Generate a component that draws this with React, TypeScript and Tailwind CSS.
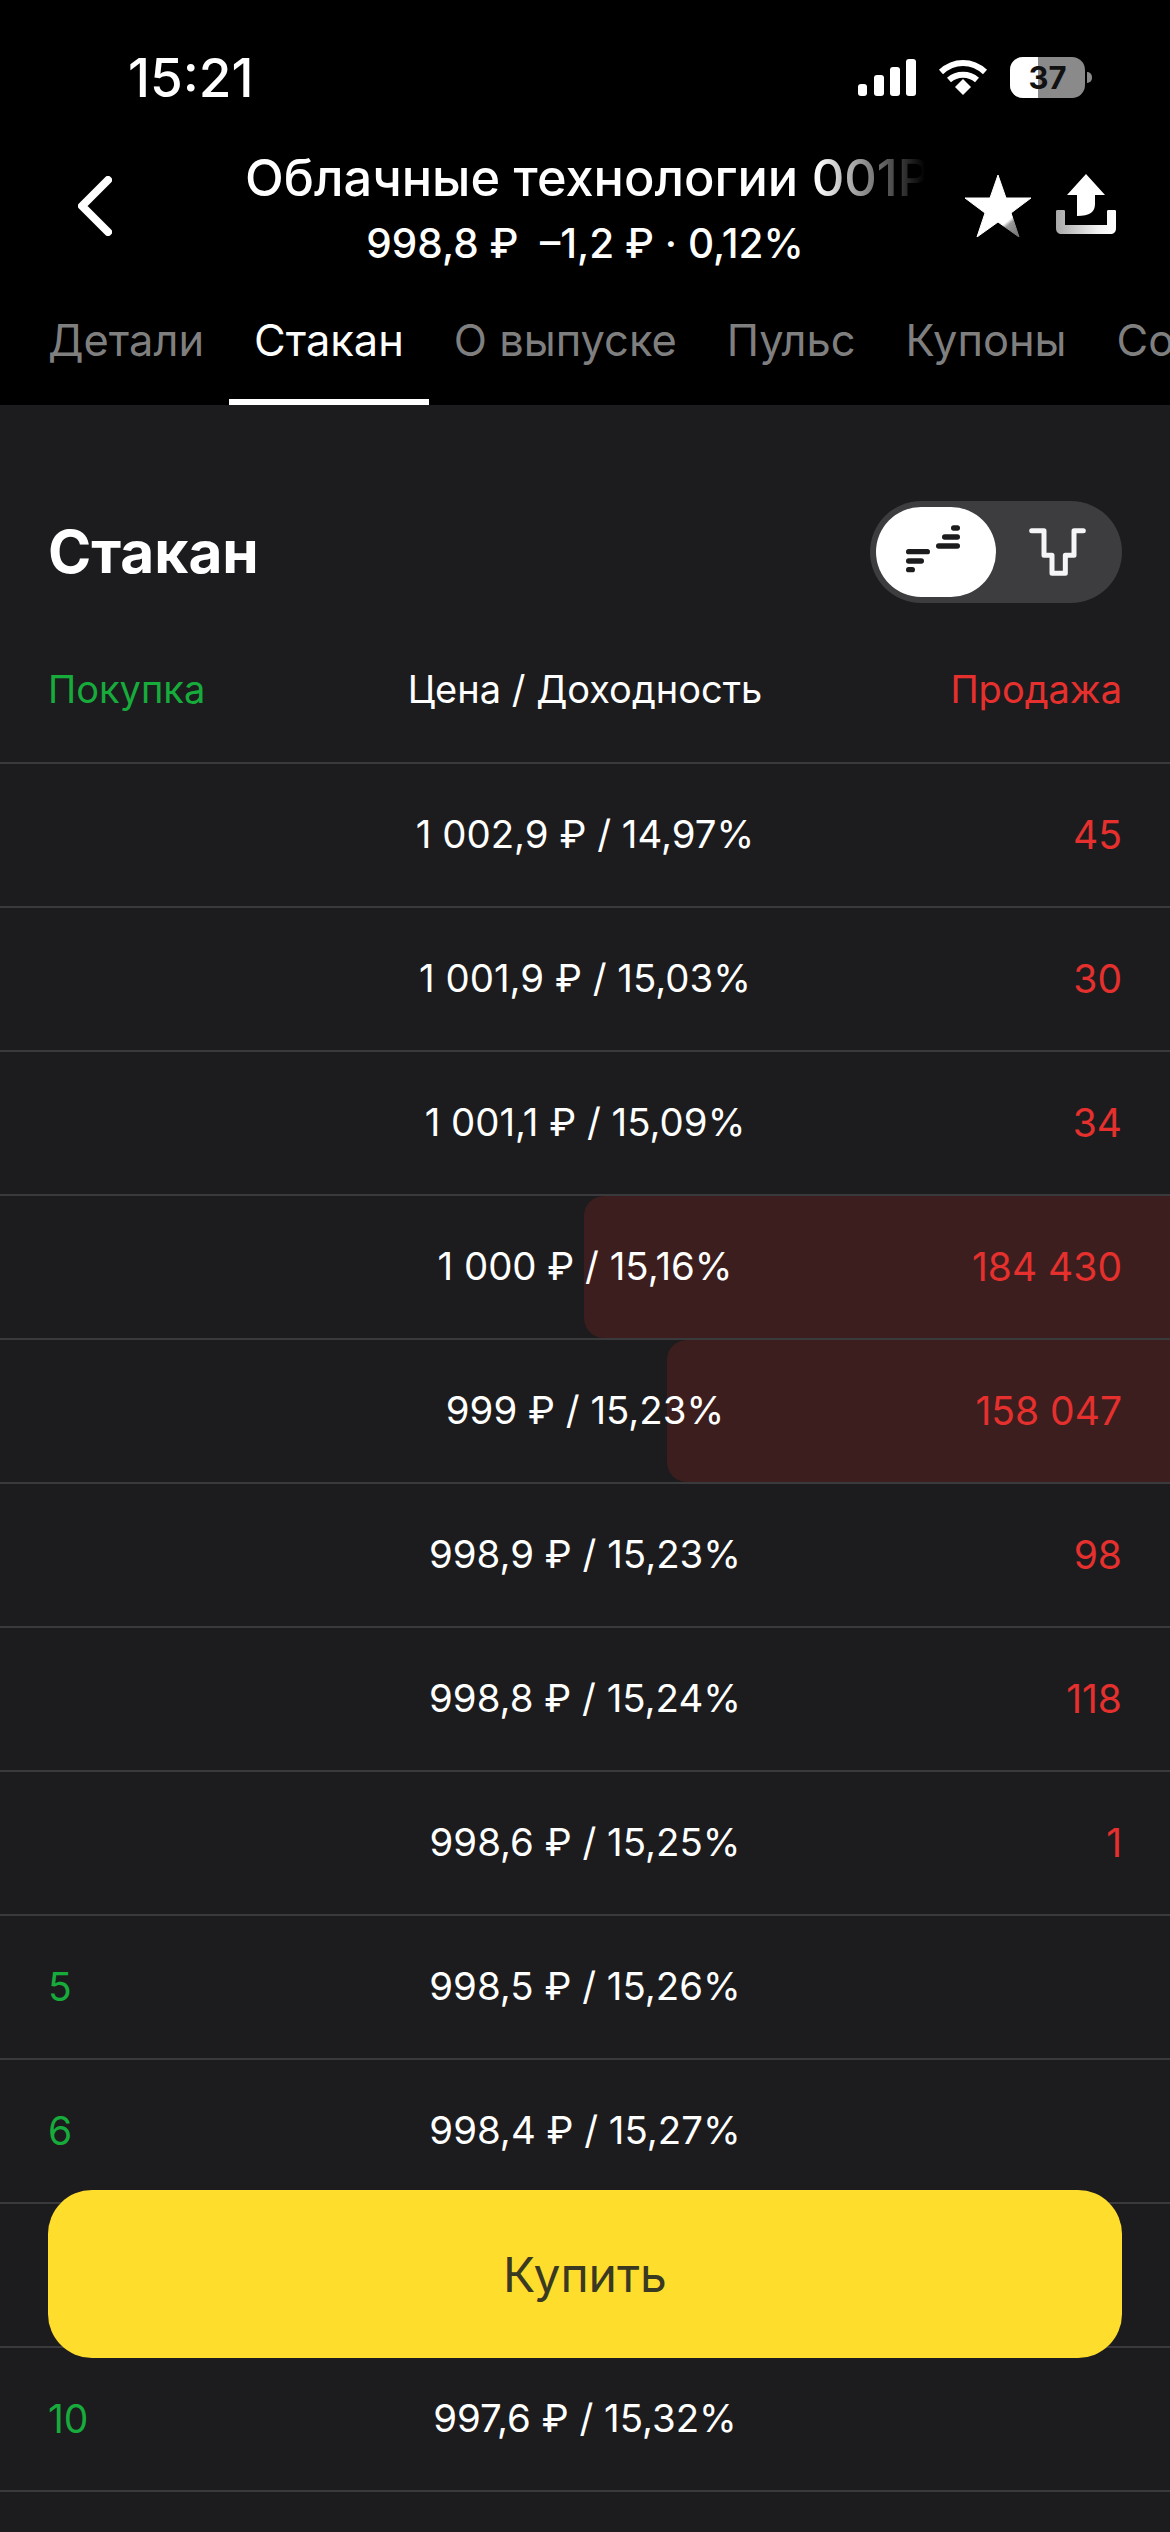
import React from "react";

const font = "font-['Inter','Noto_Sans',sans-serif]";

const tabs = ["Детали", "Стакан", "О выпуске", "Пульс", "Купоны", "События"];

const rows = [
  { price: "1 002,9 ₽ / 14,97%", sell: "45" },
  { price: "1 001,9 ₽ / 15,03%", sell: "30" },
  { price: "1 001,1 ₽ / 15,09%", sell: "34" },
  { price: "1 000 ₽ / 15,16%", sell: "184 430", bar: 584 },
  { price: "999 ₽ / 15,23%", sell: "158 047", bar: 501 },
  { price: "998,9 ₽ / 15,23%", sell: "98" },
  { price: "998,8 ₽ / 15,24%", sell: "118" },
  { price: "998,6 ₽ / 15,25%", sell: "1" },
  { price: "998,5 ₽ / 15,26%", buy: "5" },
  { price: "998,4 ₽ / 15,27%", buy: "6" },
  { price: "" },
  { price: "997,6 ₽ / 15,32%", buy: "10" },
  { price: "" },
];

const SignalIcon = () => (
  <svg width="58" height="37" viewBox="0 0 58 37" fill="#fff">
    <rect x="0" y="25" width="9" height="12" rx="3" />
    <rect x="16" y="16" width="10" height="21" rx="3" />
    <rect x="32" y="8" width="10" height="29" rx="3" />
    <rect x="48" y="0" width="10" height="37" rx="3" />
  </svg>
);

const WifiIcon = () => (
  <svg width="50" height="37" viewBox="0 0 50 37" fill="none" stroke="#fff">
    <path d="M3 13 C16 1 34 1 47 13" strokeWidth="6" />
    <path d="M11 21 C19 14 31 14 39 21" strokeWidth="6" />
    <path d="M17 28 L25 20 L33 28 L25 36 Z" fill="#fff" strokeWidth="0" />
  </svg>
);

const Battery = () => (
  <div className="flex items-center gap-[2px]">
    <div className="relative h-[41px] w-[75px] overflow-hidden rounded-[13px] bg-[#8a8a8a]">
      <div className="absolute inset-y-0 left-0 w-[28px] bg-white" />
      <span className="absolute inset-0 flex items-center justify-center text-[31px] font-bold leading-none text-[#111]">
        37
      </span>
    </div>
    <div className="h-[11px] w-[5px] rounded-r-full bg-[#8a8a8a]" />
  </div>
);

const BackIcon = () => (
  <svg width="34" height="60" viewBox="0 0 34 60" fill="none" className="mt-[26px] shrink-0">
    <path d="M30 4 L4 30 L30 56" stroke="#fff" strokeWidth="8" strokeLinecap="round" strokeLinejoin="round" />
  </svg>
);

const StarIcon = () => (
  <svg width="66" height="62" viewBox="0 0 66 62" className="shrink-0">
    <defs>
      <linearGradient id="star" x1="0.45" y1="0.55" x2="0.85" y2="1">
        <stop offset="0.45" stopColor="#fff" />
        <stop offset="0.55" stopColor="#9a9a9a" />
        <stop offset="1" stopColor="#6f6f6f" />
      </linearGradient>
    </defs>
    <path
      d="M33 0 L41 23 L66 23 L46 38 L54 62 L33 47 L12 62 L20 38 L0 23 L25 23 Z"
      fill="url(#star)"
      stroke="url(#star)"
      strokeLinejoin="round"
    />
  </svg>
);

const ShareIcon = () => (
  <svg width="60" height="60" viewBox="0 0 60 60" className="shrink-0">
    <defs>
      <linearGradient id="tray" x1="0" y1="0" x2="1" y2="0">
        <stop offset="0" stopColor="#a8a8a8" />
        <stop offset="0.7" stopColor="#f2f2f2" />
        <stop offset="1" stopColor="#fff" />
      </linearGradient>
    </defs>
    <path d="M30 0 L49 21 L39 21 L39 30 C39 38 34 42 21 42 L21 21 L11 21 Z" fill="#fff" />
    <path
      d="M0 37 C0 36 1 36 2 36 L7 36 C8 36 9 36 9 37 L9 51 L51 51 L51 37 C51 36 52 36 53 36 L58 36 C59 36 60 36 60 37 L60 54 C60 58 58 60 54 60 L6 60 C2 60 0 58 0 54 Z"
      fill="url(#tray)"
    />
  </svg>
);

const DepthIcon = () => (
  <svg width="120" height="90" viewBox="168 81 360 270" fill="none" stroke="#1c1c1e" strokeWidth="16" strokeLinecap="round">
    <path d="M266 215 H322" />
    <path d="M266 243 H304" />
    <path d="M266 269 H277" />
    <path d="M401 144 H412" />
    <path d="M374 171 H412" />
    <path d="M356 198 H412" />
  </svg>
);

const GlassIcon = () => (
  <svg width="120" height="90" viewBox="528 81 360 270" fill="none" stroke="#f5f5f7" strokeWidth="15" strokeLinecap="round" strokeLinejoin="round">
    <path d="M635 152 H672 V226 H696 V280 H736 V226 H762 V152 H790" />
  </svg>
);

export default function App() {
  return (
    <div className={`relative h-[2532px] w-[1170px] overflow-hidden bg-[#1c1c1e] text-white ${font}`}>
      {/* header */}
      <div className="h-[405px] bg-black">
        <div className="flex h-[150px] items-start justify-between pl-[128px] pr-[78px] pt-[50px]">
          <span className="text-[53px] font-medium leading-[56px]">15:21</span>
          <div className="flex items-center gap-[22px] pt-[7px]">
            <SignalIcon />
            <WifiIcon />
            <Battery />
          </div>
        </div>
        <div className="flex items-start pl-[78px]">
          <BackIcon />
          <div className="ml-[133px] w-[680px] shrink-0 text-center">
            <div className="overflow-hidden whitespace-nowrap text-left text-[50.5px] font-medium leading-[56px] [mask-image:linear-gradient(to_right,#000_84%,transparent_100%)]">
              Облачные технологии 001Р
            </div>
            <div className="mt-[16px] text-[40.5px] font-medium leading-[44px]">
              998,8 ₽&nbsp;&nbsp;–1,2 ₽ · 0,12%
            </div>
          </div>
          <div className="ml-[40px] mt-[25px]">
            <StarIcon />
          </div>
          <div className="ml-[25px] mt-[24px]">
            <ShareIcon />
          </div>
        </div>
        <div className="flex overflow-hidden whitespace-nowrap pl-[23px]">
          {tabs.map((t, i) => (
            <div
              key={t}
              className={
                i === 1
                  ? "flex h-[139px] shrink-0 items-start border-b-[6px] border-white px-[25px] pt-[49px] text-[43.4px] leading-[50px] text-white"
                  : "flex h-[139px] shrink-0 items-start px-[25px] pt-[49px] text-[43.4px] leading-[50px] text-[#7f7f7f]"
              }
            >
              {t}
            </div>
          ))}
        </div>
      </div>

      {/* title + switch */}
      <div className="flex items-center justify-between px-[48px] pt-[96px]">
        <h1 className="text-[58.5px] font-bold leading-[70px]">Стакан</h1>
        <div className="flex h-[102px] w-[252px] items-center rounded-full bg-[#3d3d3f] pl-[6px]">
          <div className="flex h-[90px] w-[120px] items-center justify-center rounded-[45px] bg-white">
            <DepthIcon />
          </div>
          <GlassIcon />
        </div>
      </div>

      {/* column titles */}
      <div className="grid h-[159px] grid-cols-[1fr_auto_1fr] items-center px-[48px] pt-[13px] text-[38px]">
        <span className="text-[#17ab3c]">Покупка</span>
        <span>Цена / Доходность</span>
        <span className="text-right text-[#e5302e]">Продажа</span>
      </div>

      {/* order book */}
      {rows.map((r, i) => (
        <div
          key={i}
          className="relative grid h-[144px] grid-cols-[1fr_auto_1fr] items-center border-t-2 border-[#3a3a3c] px-[48px] text-[39px]"
        >
          {r.bar ? (
            <div
              className="absolute bottom-0 right-0 top-0 rounded-l-[20px] bg-[#3c1e1e]"
              style={{ width: r.bar + 2 }}
            />
          ) : null}
          <span className="relative text-[#17ab3c]">{r.buy}</span>
          <span className="relative text-[38.4px]">{r.price}</span>
          <span className="relative text-right text-[#e5302e]">{r.sell}</span>
        </div>
      ))}

      {/* buy button */}
      <div className="absolute bottom-[174px] left-[48px] right-[48px] flex h-[168px] items-center justify-center rounded-[44px] bg-[#ffdd2d] pt-[2px] text-[48px] text-[#3a3a22]">
        Купить
      </div>
    </div>
  );
}
